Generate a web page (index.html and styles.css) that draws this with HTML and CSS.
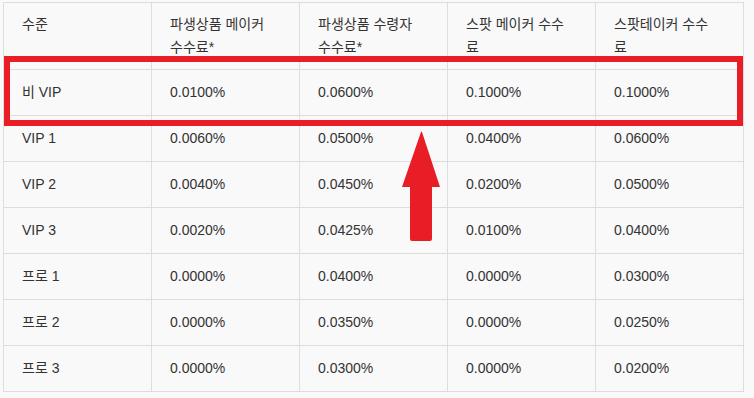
FILE: index.html
```html
<!DOCTYPE html>
<html lang="ko">
<head>
<meta charset="utf-8">
<link rel="stylesheet" href="styles.css">
</head>
<body>
<div class="wrap">
  <table class="fees">
    <thead>
      <tr>
        <th>수준</th>
        <th>파생상품 메이커<br>수수료*</th>
        <th>파생상품 수령자<br>수수료*</th>
        <th>스팟 메이커 수수<br>료</th>
        <th>스팟테이커 수수<br>료</th>
      </tr>
    </thead>
    <tbody>
      <tr><td>비 VIP</td><td>0.0100%</td><td>0.0600%</td><td>0.1000%</td><td>0.1000%</td></tr>
      <tr><td>VIP 1</td><td>0.0060%</td><td>0.0500%</td><td>0.0400%</td><td>0.0600%</td></tr>
      <tr><td>VIP 2</td><td>0.0040%</td><td>0.0450%</td><td>0.0200%</td><td>0.0500%</td></tr>
      <tr><td>VIP 3</td><td>0.0020%</td><td>0.0425%</td><td>0.0100%</td><td>0.0400%</td></tr>
      <tr><td>프로 1</td><td>0.0000%</td><td>0.0400%</td><td>0.0000%</td><td>0.0300%</td></tr>
      <tr><td>프로 2</td><td>0.0000%</td><td>0.0350%</td><td>0.0000%</td><td>0.0250%</td></tr>
      <tr><td>프로 3</td><td>0.0000%</td><td>0.0300%</td><td>0.0000%</td><td>0.0200%</td></tr>
    </tbody>
  </table>
  <div class="highlight"></div>
  <svg class="arrow" width="40" height="112" viewBox="0 0 40 112" aria-hidden="true">
    <path d="M19 1 Q19.5 0 20 1 L38 56 L30 56 L30 108 Q30 110 28 110 L10 110 Q8 110 8 108 L8 56 L0 56 Z" fill="#e81d25"/>
  </svg>
</div>
</body>
</html>
```
FILE: styles.css
```css
html, body {
  margin: 0;
  padding: 0;
  background: #f9f9f9;
}
body {
  font-family: "Liberation Sans", Arial, "Noto Sans CJK KR", sans-serif;
  font-size: 14px;
  color: #333;
}
.wrap {
  position: relative;
  padding: 2px 3px;
}
.fees {
  border-collapse: collapse;
  table-layout: fixed;
  width: 741px;
  background: #f9f9f9;
  border: 1px solid #ddd;
}
.fees th,
.fees td {
  border: 1px solid #ddd;
  text-align: left;
  vertical-align: top;
  font-weight: normal;
  line-height: 23px;
  padding: 11px 18px;
}
.fees th {
  padding: 10px 18px;
}
.highlight {
  position: absolute;
  left: 4px;
  top: 56px;
  width: 727px;
  height: 58px;
  border: 6px solid #e81d25;
}
.arrow {
  position: absolute;
  left: 402px;
  top: 131px;
}
```
